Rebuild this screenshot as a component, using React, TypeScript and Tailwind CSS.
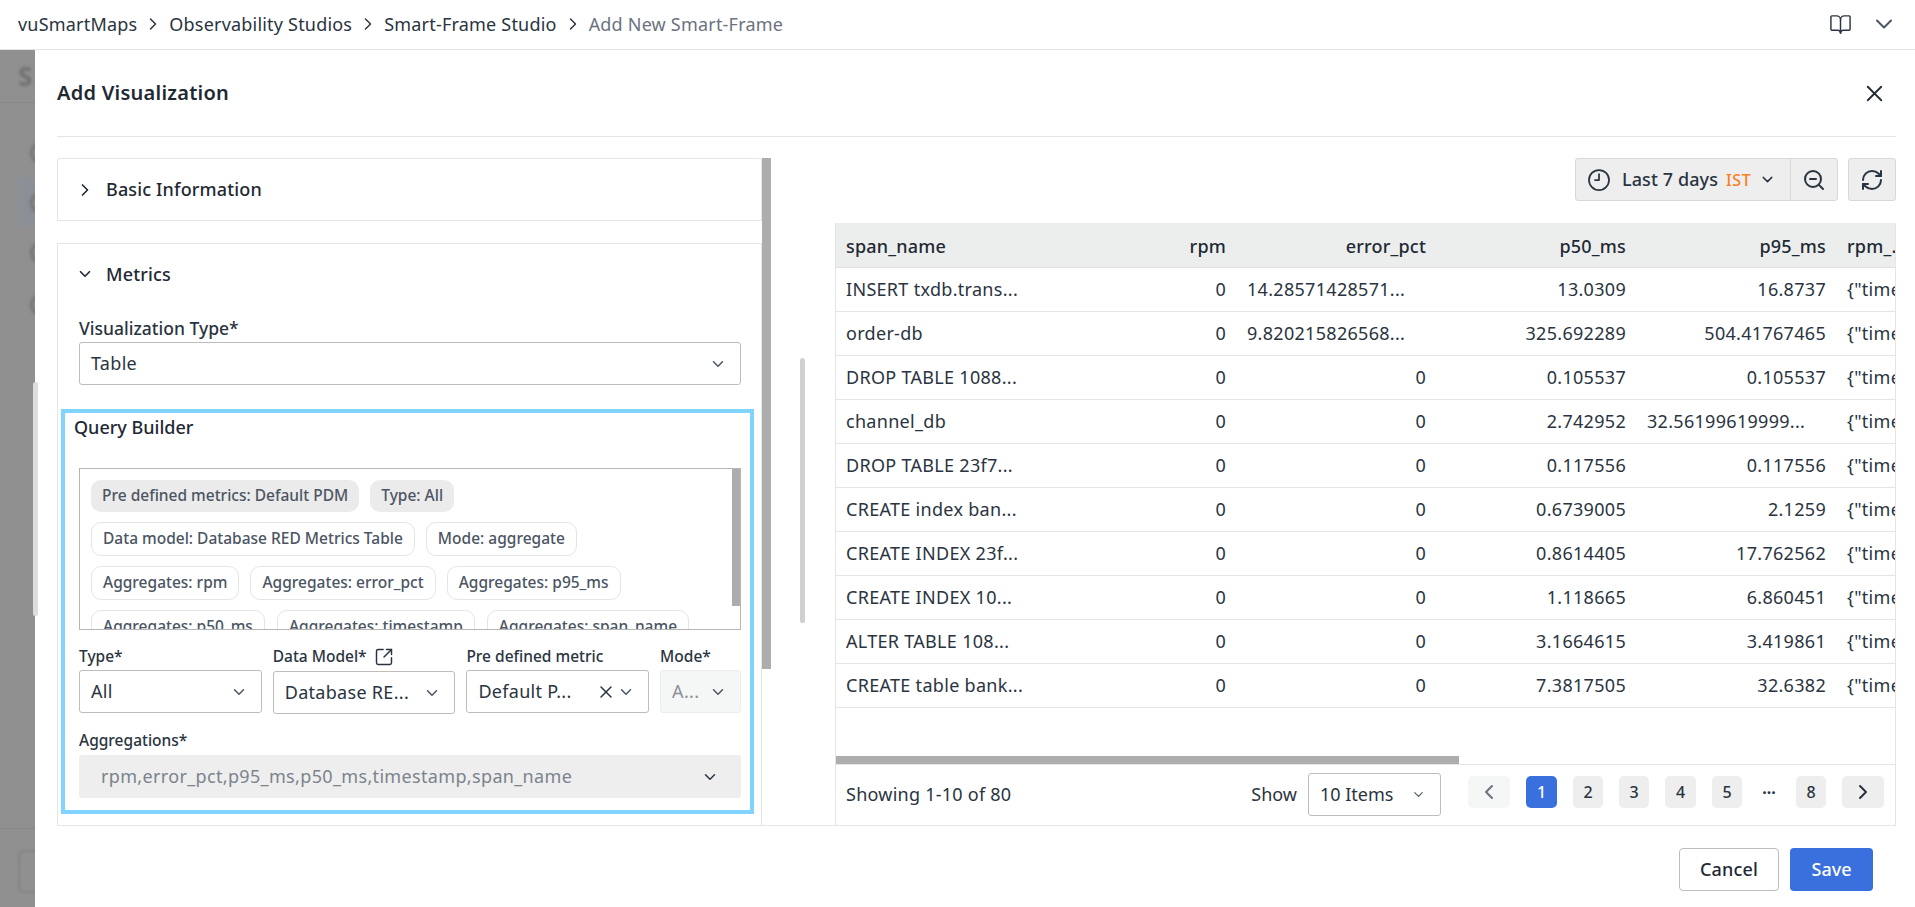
import React from "react";
import { BookOpen, ChevronDown, ChevronLeft, ChevronRight, Clock9, RefreshCw, SquareArrowOutUpRight, X, ZoomOut } from "lucide-react";

const font = "[font-family:'Noto_Sans',sans-serif]";

const rows = [
  ["INSERT txdb.trans...", "0", "14.28571428571...", "13.0309", "16.8737"],
  ["order-db", "0", "9.820215826568...", "325.692289", "504.41767465"],
  ["DROP TABLE 1088...", "0", "0", "0.105537", "0.105537"],
  ["channel_db", "0", "0", "2.742952", "32.56199619999..."],
  ["DROP TABLE 23f7...", "0", "0", "0.117556", "0.117556"],
  ["CREATE index ban...", "0", "0", "0.6739005", "2.1259"],
  ["CREATE INDEX 23f...", "0", "0", "0.8614405", "17.762562"],
  ["CREATE INDEX 10...", "0", "0", "1.118665", "6.860451"],
  ["ALTER TABLE 108...", "0", "0", "3.1664615", "3.419861"],
  ["CREATE table bank...", "0", "0", "7.3817505", "32.6382"],
];

function Crumb({ children }: { children: React.ReactNode }) {
  return (
    <>
      <span>{children}</span>
      <ChevronRight size={20} strokeWidth={1.75} className="mx-[6px] text-[#2a3440]" />
    </>
  );
}

function Chip({ children, filled }: { children: React.ReactNode; filled?: boolean }) {
  return (
    <span
      className={
        filled
          ? "flex h-[32px] items-center rounded-[10px] bg-[#ebebeb] px-[11px] text-[15.5px] font-medium text-[#4b5563] whitespace-nowrap"
          : "flex h-[34px] items-center rounded-[10px] border border-[#e5e5e5] bg-white px-[11px] text-[15.5px] font-medium text-[#4b5563] whitespace-nowrap"
      }
    >
      {children}
    </span>
  );
}

function Field({ label, icon, width, children, className }: { label: string; icon?: boolean; width: string; children: React.ReactNode; className?: string }) {
  return (
    <div className={`flex flex-col ${width} ${className ?? ""}`}>
      <div className="flex h-[26px] items-center gap-[7px] text-[15.5px] font-medium text-[#2a3440] whitespace-nowrap">
        {label}
        {icon && <SquareArrowOutUpRight size={20} strokeWidth={1.75} />}
      </div>
      {children}
    </div>
  );
}

function Box({ children, disabled, className }: { children: React.ReactNode; disabled?: boolean; className?: string }) {
  return (
    <div
      className={`flex h-[43px] items-center rounded-[3px] border ${disabled ? "border-[#ebeded] bg-[#f5f6f6] text-[#8a9199]" : "border-[#bdbdbd] bg-white text-[#2a3440]"} pl-[11px] pr-[13px] text-[18px] tracking-[0.3px] whitespace-nowrap ${className ?? ""}`}
    >
      {children}
    </div>
  );
}

function PageBtn({ children, width, active, faded }: { children: React.ReactNode; width: string; active?: boolean; faded?: boolean }) {
  return (
    <div
      className={`flex h-[32px] items-center justify-center rounded-[5px] text-[16px] font-medium ${width} ${
        active ? "bg-[#3a70dd] text-white" : faded ? "bg-[#f5f6f6] text-[#6b7280]" : "bg-[#eeeeee] text-[#2a3440]"
      }`}
    >
      {children}
    </div>
  );
}

function Dial() {
  return <div className="h-[22px] w-[22px] shrink-0 rounded-full border-[3px] border-[#747474] blur-[1.5px]" />;
}

export default function App() {
  return (
    <div className={`flex h-[907px] w-[1915px] flex-col overflow-hidden bg-white text-[#2a3440] ${font}`}>
      {/* top bar */}
      <header className="flex h-[50px] shrink-0 items-center border-b border-[#e3e3e3] bg-white pb-[1px] pl-[18px] pr-[17px] text-[18px] tracking-[0.2px] text-[#2a3440]">
        <Crumb>vuSmartMaps</Crumb>
        <Crumb>Observability Studios</Crumb>
        <Crumb>Smart-Frame Studio</Crumb>
        <span className="text-[#6b7280]">Add New Smart-Frame</span>
        <BookOpen size={23} strokeWidth={1.5} className="ml-auto mr-[18px]" />
        <ChevronDown size={28} strokeWidth={1.75} className="text-[#4b5563]" />
      </header>

      <div className="relative flex min-h-0 flex-1">
        {/* dimmed page behind the modal */}
        <div className="flex w-[35px] shrink-0 flex-col overflow-hidden bg-[#909090]">
          <div className="flex h-[53px] shrink-0 items-center justify-start border-b border-[#888888] pl-[18px]">
            <span className="text-[26px] font-bold text-[#707070] blur-[1.5px]">S</span>
          </div>
          <div className="mt-[39px] ml-[30px]"><Dial /></div>
          <div className="mt-[13px] ml-[18px] flex h-[49px] shrink-0 items-center bg-[#8b9096] pl-[12px] pt-[3px]">
            <Dial />
          </div>
          <div className="mt-[16px] ml-[30px]"><Dial /></div>
          <div className="mt-[30px] ml-[30px]"><Dial /></div>
          <div className="mt-[512px] h-px shrink-0 bg-[#878787]" />
          <div className="mt-[21px] ml-[18px] h-[43px] w-[40px] shrink-0 rounded-[6px] border-2 border-[#848484] blur-[1px]" />
        </div>
        <div className="absolute left-[33px] top-[332px] h-[234px] w-[5px] rounded-[3px] bg-[#dddddd]" />

        {/* modal */}
        <main className="flex min-w-0 flex-1 flex-col bg-white pl-[22px] pr-[19px]">
          <div className="flex h-[87px] shrink-0 items-center justify-between border-b border-[#e5e5e5]">
            <h1 className="text-[20px] font-semibold tracking-[0.25px] text-[#1f2933]">Add Visualization</h1>
            <X size={27} strokeWidth={1.6} className="mr-[8px] text-[#1f2933]" />
          </div>

          <div className="mt-[21px] flex h-[668px] shrink-0 border-b border-[#e5e5e5]">
            {/* left column */}
            <div className="flex w-[705px] shrink-0 flex-col">
              <div className="flex h-[63px] shrink-0 items-center rounded-t-[3px] border border-[#e5e5e5] pl-[17px] text-[18px] font-medium tracking-[0.15px] text-[#1f2933]">
                <ChevronRight size={20} strokeWidth={2} className="mr-[11px]" />
                Basic Information
              </div>
              <div className="mt-[22px] flex min-h-0 flex-1 flex-col border border-b-0 border-[#e5e5e5]">
                <div className="flex h-[60px] shrink-0 items-center pl-[18px] text-[18px] font-medium tracking-[0.15px] text-[#1f2933]">
                  <ChevronDown size={18} strokeWidth={2.25} className="mr-[12px]" />
                  Metrics
                </div>
                <div className="pl-[21px] pr-[20px] pt-[11px]">
                  <div className="flex h-[27px] items-center text-[17.5px] font-medium">Visualization Type*</div>
                  <Box className="justify-between">
                    Table
                    <ChevronDown size={18} strokeWidth={2} className="text-[#4b5563]" />
                  </Box>
                </div>
                <section className="ml-[3px] mt-[24px] h-[405px] w-[693px] shrink-0 border-[4px] border-[#80d4ff] pl-[9px] pr-[9px]">
                  <div className="flex h-[28px] items-center text-[18px] font-medium text-[#1f2933]">Query Builder</div>
                  <div className="ml-[5px] mt-[27px] flex h-[162px] w-[662px] overflow-hidden border border-[#b5b5b5]">
                    <div className="flex min-w-0 flex-1 flex-col gap-[10px] pl-[11px] pt-[11px]">
                      <div className="flex gap-[11px]">
                        <Chip filled>Pre defined metrics: Default PDM</Chip>
                        <Chip filled>Type: All</Chip>
                      </div>
                      <div className="flex gap-[11px]">
                        <Chip>Data model: Database RED Metrics Table</Chip>
                        <Chip>Mode: aggregate</Chip>
                      </div>
                      <div className="flex gap-[11px]">
                        <Chip>Aggregates: rpm</Chip>
                        <Chip>Aggregates: error_pct</Chip>
                        <Chip>Aggregates: p95_ms</Chip>
                      </div>
                      <div className="flex gap-[12px]">
                        <Chip>Aggregates: p50_ms</Chip>
                        <Chip>Aggregates: timestamp</Chip>
                        <Chip>Aggregates: span_name</Chip>
                      </div>
                    </div>
                    <div className="h-[137px] w-[8px] shrink-0 bg-[#adadad]" />
                  </div>
                  <div className="ml-[5px] mt-[14px] flex w-[662px] gap-[11px]">
                    <Field label="Type*" width="w-[183px]">
                      <Box className="justify-between">
                        All
                        <ChevronDown size={18} strokeWidth={2} className="text-[#4b5563]" />
                      </Box>
                    </Field>
                    <Field label="Data Model*" icon width="w-[183px]">
                      <Box className="mt-px justify-between">
                        Database RE...
                        <ChevronDown size={18} strokeWidth={2} className="text-[#4b5563]" />
                      </Box>
                    </Field>
                    <Field label="Pre defined metric" width="w-[183px]">
                      <Box>
                        Default P...
                        <X size={20} strokeWidth={1.75} className="ml-auto mr-[1px]" />
                        <ChevronDown size={18} strokeWidth={2} className="text-[#4b5563]" />
                      </Box>
                    </Field>
                    <Field label="Mode*" width="w-[81px]">
                      <Box disabled className="justify-between">
                        A...
                        <ChevronDown size={18} strokeWidth={2} className="text-[#4b5563]" />
                      </Box>
                    </Field>
                  </div>
                  <div className="ml-[5px] mt-[13px] flex h-[28px] items-center text-[15.5px] font-medium">Aggregations*</div>
                  <div className="ml-[5px] flex h-[43px] w-[662px] items-center justify-between rounded-[3px] bg-[#eeeeee] pl-[22px] pr-[22px] text-[18px] tracking-[0.34px] text-[#7b838c]">
                    rpm,error_pct,p95_ms,p50_ms,timestamp,span_name
                    <ChevronDown size={18} strokeWidth={2} className="text-[#2a3440]" />
                  </div>
                </section>
              </div>
            </div>
            <div className="h-[511px] w-[9px] shrink-0 bg-[#adadad]" />

            {/* gap with its scrollbar */}
            <div className="w-[64px] shrink-0 pl-[29px] pt-[200px]">
              <div className="h-[265px] w-[5px] rounded-[3px] bg-[#d0d0d0]" />
            </div>

            {/* right column */}
            <div className="flex min-w-0 flex-1 flex-col">
              <div className="flex h-[65px] shrink-0 justify-end gap-[10px]">
                <div className="flex h-[43px] w-[263px] items-center rounded-[3px] border border-[#d8d8d8] bg-[#eeeeee]">
                  <Clock9 size={24} strokeWidth={1.75} className="ml-[11px] mr-[11px] shrink-0" />
                  <span className="text-[18px] font-medium tracking-[0.1px] whitespace-nowrap">Last 7 days</span>
                  <span className="ml-[8px] text-[16px] font-medium tracking-[0.6px] text-[#f97f1e]">IST</span>
                  <ChevronDown size={17} strokeWidth={2} className="ml-[8px]" />
                  <div className="ml-auto flex h-full w-[47px] shrink-0 items-center justify-center border-l border-[#d8d8d8]">
                    <ZoomOut size={24} strokeWidth={2} />
                  </div>
                </div>
                <div className="flex h-[43px] w-[48px] items-center justify-center rounded-[3px] border border-[#d8d8d8] bg-[#eeeeee]">
                  <RefreshCw size={24} strokeWidth={2} />
                </div>
              </div>

              <div className="flex min-h-0 flex-1 flex-col overflow-hidden border-x border-[#e5e5e5]">
                <div className="grid h-[45px] shrink-0 grid-cols-[200px_200px_200px_200px_200px_60px] items-center border-b border-[#e0e0e0] bg-[#eceeee] pt-[2px] text-[18px] font-medium tracking-[0.2px] text-[#1f2933]">
                  <div className="pl-[10px]">span_name</div>
                  <div className="pr-[10px] text-right">rpm</div>
                  <div className="pr-[10px] text-right">error_pct</div>
                  <div className="pr-[10px] text-right">p50_ms</div>
                  <div className="pr-[10px] text-right">p95_ms</div>
                  <div className="pl-[11px] whitespace-nowrap">rpm_...</div>
                </div>
                {rows.map((r) => (
                  <div key={r[0]} className="grid h-[44px] shrink-0 grid-cols-[200px_200px_200px_200px_200px_60px] items-center border-b border-[#e5e5e5] text-[18px] tracking-[0.3px] text-[#2a3440]">
                    <div className="pl-[10px] whitespace-nowrap">{r[0]}</div>
                    <div className="pr-[10px] text-right">{r[1]}</div>
                    <div className={r[2].endsWith("...") ? "pl-[11px] text-left whitespace-nowrap" : "pr-[10px] text-right"}>{r[2]}</div>
                    <div className="pr-[10px] text-right">{r[3]}</div>
                    <div className={r[4].endsWith("...") ? "pl-[11px] text-left whitespace-nowrap" : "pr-[10px] text-right"}>{r[4]}</div>
                    <div className="pl-[11px] whitespace-nowrap">{'{"timestamp"'}</div>
                  </div>
                ))}
                <div className="mt-[48px] h-[8px] w-[623px] shrink-0 bg-[#adadad]" />
                <div className="flex h-[60px] shrink-0 items-center border-t border-[#e5e5e5] pl-[10px] pr-[11px] text-[18px]">
                  <span className="tracking-[0.25px]">Showing 1-10 of 80</span>
                  <span className="ml-auto mr-[11px]">Show</span>
                  <div className="mr-[27px] flex h-[43px] w-[133px] items-center justify-between rounded-[3px] border border-[#bdbdbd] pl-[11px] pr-[14px]">
                    10 Items
                    <ChevronDown size={15} strokeWidth={1.75} className="text-[#4b5563]" />
                  </div>
                  <div className="mb-[5px] flex items-center gap-[16px]">
                    <PageBtn faded width="w-[42px]"><ChevronLeft size={24} strokeWidth={2} /></PageBtn>
                    <PageBtn active width="w-[31px]">1</PageBtn>
                    <PageBtn width="w-[30px]">2</PageBtn>
                    <PageBtn width="w-[30px]">3</PageBtn>
                    <PageBtn width="w-[31px]">4</PageBtn>
                    <PageBtn width="w-[30px]">5</PageBtn>
                    <span className="w-[22px] text-center text-[16px] font-bold leading-none">···</span>
                    <PageBtn width="w-[30px]">8</PageBtn>
                    <PageBtn width="w-[42px]"><ChevronRight size={24} strokeWidth={2} /></PageBtn>
                  </div>
                </div>
              </div>
            </div>
          </div>

          {/* footer */}
          <div className="mt-[22px] flex justify-end gap-[11px] pr-[23px]">
            <button className="h-[43px] w-[100px] rounded-[4px] border border-[#bdbdbd] bg-white text-[18px] font-medium tracking-[0.2px] text-[#1f2933]">Cancel</button>
            <button className="h-[43px] w-[83px] rounded-[4px] bg-[#3a70dd] text-[18px] font-medium text-white">Save</button>
          </div>
        </main>
      </div>
    </div>
  );
}
